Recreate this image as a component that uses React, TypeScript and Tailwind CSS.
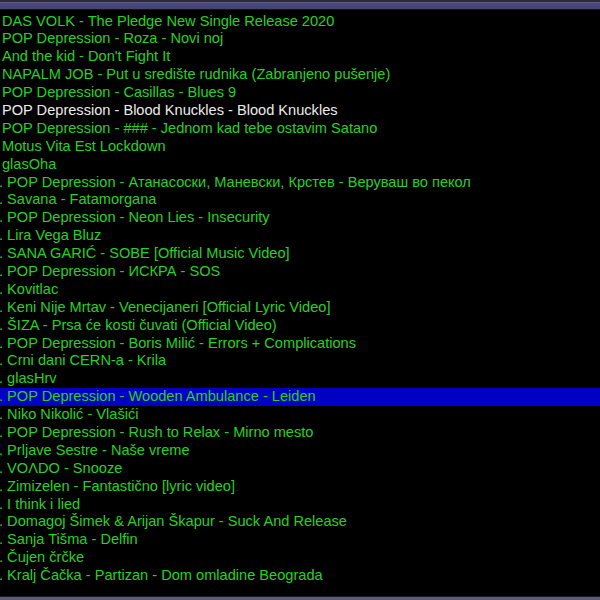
import React from 'react';

const tracks: string[] = [
  'DAS VOLK - The Pledge New Single Release 2020',
  'POP Depression - Roza - Novi noj',
  'And the kid - Don\'t Fight It',
  'NAPALM JOB - Put u središte rudnika (Zabranjeno pušenje)',
  'POP Depression - Casillas - Blues 9',
  'POP Depression - Blood Knuckles - Blood Knuckles',
  'POP Depression - ### - Jednom kad tebe ostavim Satano',
  'Motus Vita Est Lockdown',
  'glasOha',
  'POP Depression - Атанасоски, Маневски, Крстев - Веруваш во пекол',
  'Savana - Fatamorgana',
  'POP Depression - Neon Lies - Insecurity',
  'Lira Vega Bluz',
  'SANA GARIĆ - SOBE [Official Music Video]',
  'POP Depression - ИСКРА - SOS',
  'Kovitlac',
  'Keni Nije Mrtav - Venecijaneri [Official Lyric Video]',
  'ŠIZA - Prsa će kosti čuvati (Official Video)',
  'POP Depression - Boris Milić - Errors + Complications',
  'Crni dani CERN-a - Krila',
  'glasHrv',
  'POP Depression - Wooden Ambulance - Leiden',
  'Niko Nikolić - Vlašići',
  'POP Depression - Rush to Relax - Mirno mesto',
  'Prljave Sestre - Naše vreme',
  'VOΛDO - Snooze',
  'Zimizelen - Fantastično [lyric video]',
  'I think i lied',
  'Domagoj Šimek & Arijan Škapur - Suck And Release',
  'Sanja Tišma - Delfin',
  'Čujen črčke',
  'Kralj Čačka - Partizan - Dom omladine Beograda',
];

const playing = 5;
const selected = 21;

export default function App() {
  return (
    <div className="w-[600px] h-[600px] bg-black flex flex-col overflow-hidden font-['Liberation_Sans',Arial,sans-serif]">
      {/* title strip */}
      <div className="h-[2px] bg-[#2c2a3c]" />
      <div className="h-[1px] bg-[#5c5a8a]" />
      <div className="h-[6px] bg-gradient-to-b from-[#4c4a7c] to-[#44426e]" />
      <div className="h-[1px] bg-[#14131e]" />

      <div className="flex-1 flex flex-col pt-[2.5px]">
        {tracks.map((t, i) => (
          <div
            key={i}
            className={
              'h-[17.9px] leading-[17.9px] text-[14.6px] whitespace-nowrap pl-[2px] ' +
              (i === selected ? 'bg-[#0000c4] ' : '') +
              (i === playing ? 'text-[#ececec]' : 'text-[#26d226]')
            }
          >
            {i >= 9 ? (
              <>
                <span className="-ml-[3px]">. </span>
                {t}
              </>
            ) : (
              t
            )}
          </div>
        ))}
      </div>

      <div className="h-[1px] bg-[#1a1930]" />
      <div className="h-[3px] bg-[#5c5a74]" />
    </div>
  );
}
